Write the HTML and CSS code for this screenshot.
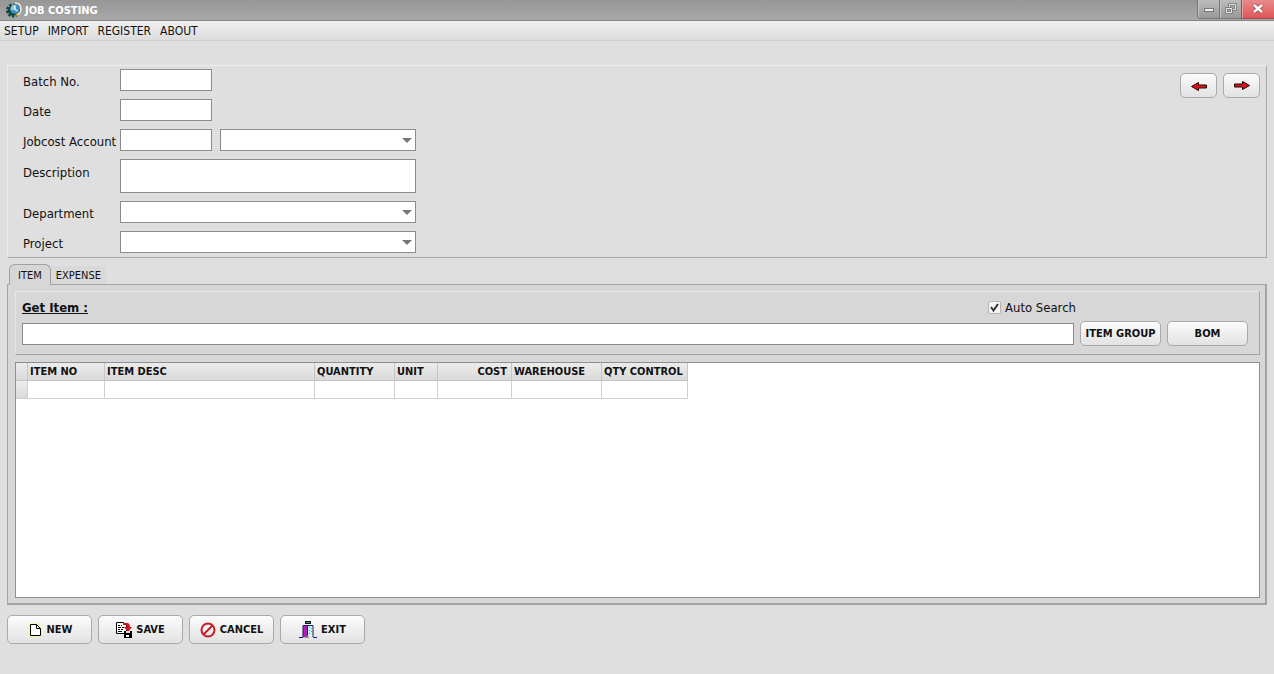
FILE: index.html
```html
<!DOCTYPE html>
<html lang="en">

<head>
  <meta charset="UTF-8">
  <title>JOB COSTING</title>
  <link rel="stylesheet" href="styles.css">
</head>

<body>

  <header class="titlebar">
    <svg class="app-icon" width="16" height="16" viewBox="0 0 16 16">
      <circle cx="7" cy="8.500" r="5.800" fill="none" stroke="#12483a" stroke-width="2.600" stroke-dasharray="2.400 1.400"/>
      <circle cx="7" cy="8.500" r="5.200" fill="#12483a"/>
      <circle cx="9" cy="7" r="4.800" fill="#3d8fc6"/>
      <path d="M9 2.500a4.500 4.500 0 0 0-4 6l4-1z" fill="#8fc7dc"/>
      <path d="M9 3.500V7.500l2.500 1.500" fill="none" stroke="#fff" stroke-width="1.300"/>
      <path d="M9 1q6 0 6 6 0 4-4 6" fill="none" stroke="#efe8cb" stroke-width="1.500"/>
      <path d="M12 13.500l-3 .5 2-3z" fill="#d9a520"/>
    </svg>
    <h1>JOB COSTING</h1>
    <div class="win-buttons">
      <button type="button" aria-label="Minimize">
        <svg width="12" height="12" viewBox="0 0 12 12"><rect x="1.500" y="5.500" width="9" height="3" fill="#eee" stroke="#777"/></svg>
      </button>
      <button type="button" aria-label="Restore">
        <svg width="12" height="12" viewBox="0 0 12 12" fill="none">
          <path d="M4.500 4V1.500h6v5H8" stroke="#777" stroke-width="2.600"/>
          <rect x="1.500" y="5.500" width="5" height="4" stroke="#777" stroke-width="2.600"/>
          <path d="M4.500 4V1.500h6v5H8" stroke="#e4e4e4"/>
          <rect x="1.500" y="5.500" width="5" height="4" stroke="#e4e4e4"/>
        </svg>
      </button>
      <button type="button" class="close" aria-label="Close">
        <svg width="12" height="12" viewBox="0 0 12 12" fill="none">
          <path d="M2 2l8 7M10 2l-8 7" stroke="#9a4444" stroke-width="4"/>
          <path d="M2 2l8 7M10 2l-8 7" stroke="#fff" stroke-width="2.400"/>
        </svg>
      </button>
    </div>
  </header>

  <nav class="menu">
    <a href="#">SETUP</a>
    <a href="#">IMPORT</a>
    <a href="#">REGISTER</a>
    <a href="#">ABOUT</a>
  </nav>

  <main>

    <section class="batch">
      <div class="fields">
        <label for="batch">Batch No.</label>
        <input id="batch" class="short" type="text">

        <label for="date">Date</label>
        <input id="date" class="short" type="text">

        <label for="account">Jobcost Account</label>
        <div class="account">
          <input id="account" class="short" type="text">
          <select aria-label="Account name"></select>
        </div>

        <label for="desc" class="top">Description</label>
        <textarea id="desc"></textarea>

        <label for="dept">Department</label>
        <select id="dept"></select>

        <label for="project">Project</label>
        <select id="project"></select>
      </div>

      <div class="arrows">
        <button type="button" class="btn" aria-label="Previous">
          <svg width="18" height="12" viewBox="0 0 18 12"><path d="M1.500 6.500L8.500 2.500v2.500h8v3h-8v2.500z" fill="#e3101c" stroke="#200"/></svg>
        </button>
        <button type="button" class="btn" aria-label="Next">
          <svg width="18" height="12" viewBox="0 0 18 12"><path d="M16.500 5.500L9.500 1.500V4h-8v3h8v2.500z" fill="#e3101c" stroke="#200"/></svg>
        </button>
      </div>
    </section>

    <div class="tabs">
      <button type="button" class="tab active">ITEM</button>
      <button type="button" class="tab">EXPENSE</button>
    </div>

    <section class="tab-page">

      <div class="get-item">
        <div class="get-head">
          <label for="item" class="get-label">Get Item :</label>
          <label class="auto"><input type="checkbox" checked>Auto Search</label>
        </div>
        <div class="get-row">
          <input id="item" type="text">
          <button type="button" class="btn">ITEM GROUP</button>
          <button type="button" class="btn">BOM</button>
        </div>
      </div>

      <div class="grid">
        <table>
          <colgroup>
            <col class="c-mark"><col class="c-no"><col class="c-desc"><col class="c-qty">
            <col class="c-unit"><col class="c-cost"><col class="c-ware"><col class="c-ctrl">
          </colgroup>
          <thead>
            <tr>
              <th></th>
              <th>ITEM NO</th>
              <th>ITEM DESC</th>
              <th>QUANTITY</th>
              <th>UNIT</th>
              <th class="right">COST</th>
              <th>WAREHOUSE</th>
              <th>QTY CONTROL</th>
            </tr>
          </thead>
          <tbody>
            <tr>
              <td class="mark"></td>
              <td></td>
              <td></td>
              <td></td>
              <td></td>
              <td></td>
              <td></td>
              <td></td>
            </tr>
          </tbody>
        </table>
      </div>

    </section>

    <footer class="actions">
      <button type="button" class="btn">
        <svg width="16" height="16" viewBox="0 0 16 16">
          <path d="M2 0l3 2 2-2 2 2 4-2 0 3 3 1-2 3 2 4-3 1 1 4-5-2-3 2-2-2-4 1 1-4-2-2 2-3z" fill="#f6f5b0"/>
          <path d="M3.500 2.500h6l4 4v7h-10z" fill="#fff" stroke="#000"/>
          <path d="M9.500 2.500v4h4" fill="none" stroke="#000"/>
        </svg>
        NEW
      </button>
      <button type="button" class="btn">
        <svg width="16" height="16" viewBox="0 0 16 16">
          <path d="M.5.5h7l3 3v8H.5z" fill="#fff" stroke="#000"/>
          <path d="M2 3.500h2M5 3.500h1M2 5.500h3M6 5.500h2M2 7.500h2M5 7.500h2M2 9.500h4" stroke="#000"/>
          <path d="M7 1h4q3 0 3 4h2l-4 5-4-5h3q0-2-2-2H7z" fill="#d9131d"/>
          <path d="M8 9h8v7H8z" fill="#000"/>
          <path d="M10 9h4v2h-4z" fill="#ddd"/>
          <path d="M10 13h3v2h-3z" fill="#fff"/>
        </svg>
        SAVE
      </button>
      <button type="button" class="btn">
        <svg width="16" height="16" viewBox="0 0 16 16" fill="none" stroke="#c81c24" stroke-width="2">
          <circle cx="8" cy="8" r="6.500"/>
          <path d="M3.500 12.500l9-9"/>
        </svg>
        CANCEL
      </button>
      <button type="button" class="btn">
        <svg width="18" height="18" viewBox="0 0 18 18">
          <path d="M6 0h6v3H6z" fill="#111"/>
          <path d="M7 1h4v1H7z" fill="#31a052"/>
          <path d="M9 5h4v9H9z" fill="#c4f6fa"/>
          <path d="M10 6.500h1M12 7.500h1M10 9.500h1M12 10.500h1M10 12.500h1" stroke="#35b8c8"/>
          <path d="M4 5h4v11H4z" fill="#b31cbb"/>
          <path d="M8.500 5v10" stroke="#16166b"/>
          <path d="M0 16.500h4V4.500h10v11q0 1 1 1h3" fill="none" stroke="#16166b"/>
          <path d="M5 17l4-3 1 3z" fill="#888"/>
        </svg>
        EXIT
      </button>
    </footer>

  </main>

</body>

</html>
```

FILE: styles.css
```css
* {
  box-sizing: border-box;
}
body {
  margin: 0;
  min-height: 100vh;
  display: flex;
  flex-direction: column;
  background: #dfdfdf;
  color: #111;
  font-family: Tahoma, "DejaVu Sans Condensed", "DejaVu Sans", sans-serif;
  font-size: 12px;
}
button, input, select, textarea {
  font: inherit;
  color: inherit;
  margin: 0;
}

/* title bar */
.titlebar {
  display: flex;
  align-items: center;
  gap: 3px;
  height: 21px;
  padding-left: 6px;
  background: linear-gradient(#969696, #a8a8a8);
  border-bottom: 1px solid #858585;
}
.titlebar h1 {
  flex: 1;
  margin: 0;
  font-size: 11px;
  color: #fff;
}
.win-buttons {
  display: flex;
  align-self: stretch;
}
.win-buttons button {
  display: flex;
  align-items: center;
  justify-content: center;
  width: 22px;
  height: 19px;
  padding: 0;
  border: 1px solid #777;
  border-width: 0 0 1px 1px;
  background: linear-gradient(#bcbcbc, #999);
  box-shadow: inset 1px 0 #c4c4c4;
}
.win-buttons button:first-child {
  border-bottom-left-radius: 4px;
}
.win-buttons .close {
  width: 33px;
  background: linear-gradient(#e88a8a, #df5558);
  box-shadow: inset 1px 0 #eda0a0;
  border-color: #a04a4a;
}

/* menu */
.menu {
  display: flex;
  gap: 9px;
  height: 20px;
  padding-left: 4px;
  line-height: 20px;
  background: linear-gradient(#f0f0f0, #dcdcdc);
  border-bottom: 1px solid #d0d0d0;
}
.menu a {
  color: #111;
  text-decoration: none;
}

main {
  flex: 1;
  display: flex;
  flex-direction: column;
  padding: 24px 7px 30px;
}

/* shared controls */
input[type="text"], select, textarea {
  height: 22px;
  padding: 0 4px;
  border: 1px solid #8c8c8c;
  border-radius: 0;
  background: #fff;
  outline: none;
}
select {
  width: 100%;
  appearance: none;
  background: #fff url('data:image/svg+xml,<svg xmlns="http://www.w3.org/2000/svg" width="10" height="5"><path d="M0 0h10L5 5z" fill="%23777"/></svg>') no-repeat right 3px center;
}
.btn {
  display: flex;
  align-items: center;
  justify-content: center;
  gap: 4px;
  height: 25px;
  padding: 0;
  border: 1px solid #a9a9a9;
  border-radius: 5px;
  background: linear-gradient(#fcfcfc, #e2e2e2);
  font-size: 11px;
  font-weight: bold;
  white-space: nowrap;
}

/* batch header */
.batch {
  display: flex;
  justify-content: space-between;
  padding: 3px 6px 4px 15px;
  border: 1px solid #ededed;
  border-right-color: #a8a8a8;
  border-bottom-color: #a8a8a8;
}
.fields {
  display: grid;
  grid-template-columns: 89px 296px;
  gap: 8px;
  align-items: center;
}
.fields label {
  padding-top: 2px;
  font-size: 13px;
  white-space: nowrap;
}
.fields .top {
  align-self: start;
  line-height: 24px;
}
.fields .short {
  width: 92px;
}
.account {
  display: flex;
  gap: 8px;
}
.account select {
  flex: 1;
}
textarea {
  display: block;
  width: 100%;
  resize: none;
}
.fields textarea {
  height: 34px;
}
.arrows {
  display: flex;
  gap: 6px;
  padding-top: 4px;
}
.arrows .btn {
  width: 37px;
}

/* tabs */
.tabs {
  display: flex;
  align-items: flex-end;
  margin-top: 6px;
  padding-left: 2px;
}
.tab {
  height: 18px;
  padding: 0 5px;
  border: 0;
  background: #d9d9d9;
  font-size: 11px;
}
.tab.active {
  height: 21px;
  margin-bottom: -1px;
  padding: 0 8px;
  border: 1px solid #a0a0a0;
  border-bottom: 0;
  border-radius: 6px 6px 0 0;
  background: #d7d7d7;
  z-index: 1;
}
.tab-page {
  flex: 1;
  display: flex;
  flex-direction: column;
  gap: 7px;
  padding: 6px 5px 5px 7px;
  border: 1px solid #a4a4a4;
  border-right-width: 2px;
  border-bottom-width: 2px;
  background: #d7d7d7;
}

/* item search */
.get-item {
  padding: 5px 11px 8px 6px;
  border: 1px solid #e8e8e8;
  border-right-color: #a2a2a2;
  border-bottom-color: #a2a2a2;
}
.get-head {
  display: flex;
  align-items: center;
  justify-content: space-between;
  height: 20px;
  margin-bottom: 4px;
  font-size: 13px;
}
.get-label {
  font-weight: bold;
  text-decoration: underline;
}
.auto {
  display: flex;
  align-items: center;
  gap: 4px;
  margin-right: 172px;
}
.auto input {
  appearance: none;
  width: 13px;
  height: 13px;
  border: 1px solid #b4b4b4;
  border-radius: 2px;
  background: #f6f6f6;
}
.auto input:checked {
  background: #f6f6f6 url('data:image/svg+xml,<svg xmlns="http://www.w3.org/2000/svg" width="11" height="11"><path d="M2 5l2.500 3.500L9 2" fill="none" stroke="%23333" stroke-width="2"/></svg>') no-repeat center;
}
.get-row {
  display: grid;
  grid-template-columns: 1fr 81px 81px;
  gap: 6px;
  align-items: center;
}

/* item grid */
.grid {
  flex: 1;
  border: 1px solid #8f8f8f;
  background: #fff;
}
table {
  table-layout: fixed;
  width: 672px;
  border-spacing: 0;
}
th, td {
  height: 18px;
  padding: 0 4px 0 2px;
  border-right: 1px solid #d0d0d0;
  border-bottom: 1px solid #d0d0d0;
}
th {
  background: linear-gradient(#ececec, #dadada);
  border-color: #c4c4c4;
  font-size: 11px;
  line-height: 16px;
  text-align: left;
  white-space: nowrap;
}
.right {
  text-align: right;
}
.mark {
  background: linear-gradient(#ececec, #dadada);
}
.c-mark { width: 12px; }
.c-no { width: 77px; }
.c-desc { width: 210px; }
.c-qty { width: 80px; }
.c-unit { width: 43px; }
.c-cost { width: 74px; }
.c-ware { width: 90px; }
.c-ctrl { width: 86px; }

/* bottom buttons */
.actions {
  display: flex;
  gap: 6px;
  margin-top: 10px;
}
.actions .btn {
  width: 85px;
  height: 29px;
}
```
